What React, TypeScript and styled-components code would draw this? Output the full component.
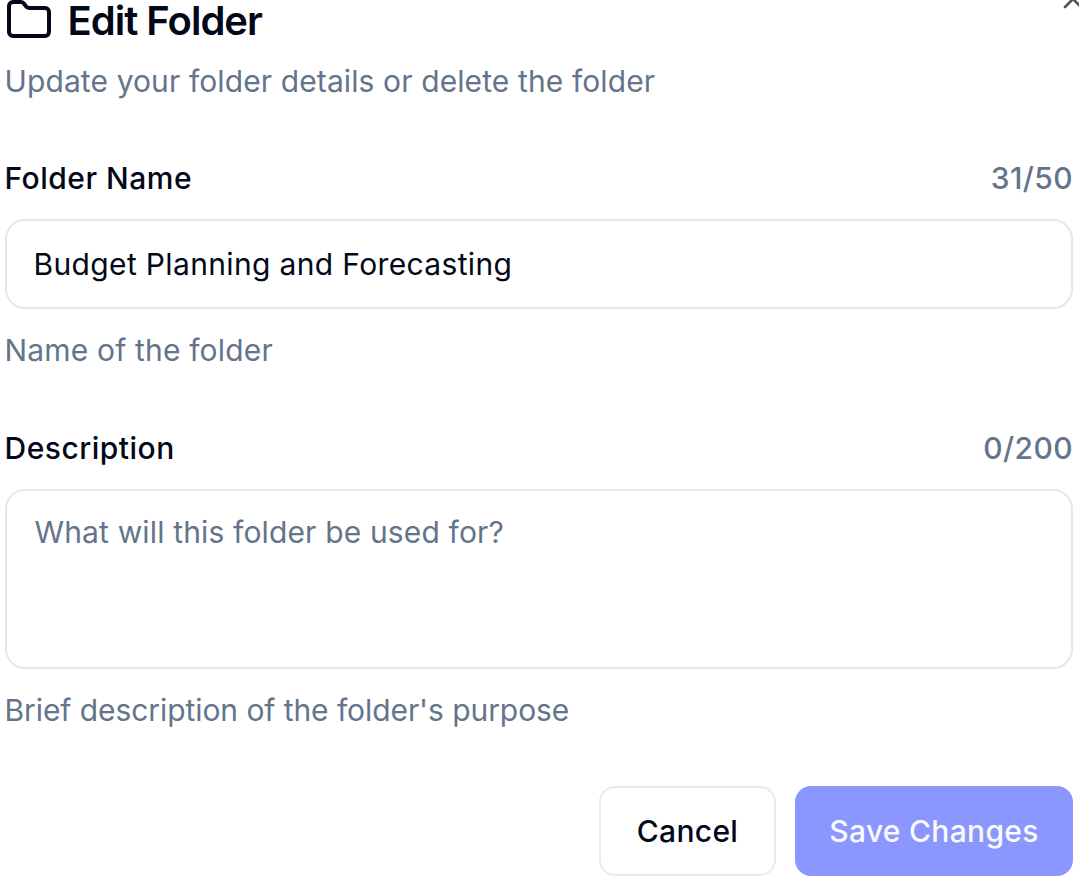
import React from "react";
import styled, { createGlobalStyle } from "styled-components";

const Global = createGlobalStyle`
  html, body { margin: 0; padding: 0; background: #fff; overflow: hidden; }
  body { font-family: Inter, "Liberation Sans", sans-serif; }
  * { box-sizing: border-box; }
`;
const Dialog = styled.div`
  position: relative;
  width: 1079px;
  height: 886px;
  padding: 0 6px 0 4.5px;
  display: flex;
  flex-direction: column;
  overflow: hidden;
`;
const TitleRow = styled.div`
  display: flex;
  align-items: center;
  gap: 15px;
  height: 42px;
`;
const FolderIcon = styled.svg`
  flex: none;
  margin-top: -2px;
`;
const Title = styled.h2`
  margin: 0;
  font-size: 40px;
  line-height: 42px;
  font-weight: 600;
  letter-spacing: -1px;
  color: #020817;
`;
const Close = styled.div`
  position: absolute;
  top: -17px;
  right: -10px;
  color: #4b5563;
  display: flex;
`;
const Sub = styled.p`
  margin: 19px 0 0;
  font-size: 30px;
  line-height: 40px;
  color: #64748b;
  letter-spacing: 0.11px;
`;
const Field = styled.div<{ $top: number }>`
  margin-top: ${(p) => p.$top}px;
  display: flex;
  flex-direction: column;
`;
const LabelRow = styled.div`
  display: flex;
  justify-content: space-between;
  align-items: center;
  height: 40px;
`;
const Label = styled.label`
  font-size: 30px;
  font-weight: 500;
  letter-spacing: 0.5px;
  color: #020817;
`;
const Count = styled.span`
  font-size: 30px;
  font-weight: 500;
  letter-spacing: 0.4px;
  color: #64748b;
`;
const Input = styled.div`
  margin-top: 21px;
  height: 90px;
  border: 2px solid #e5e7eb;
  border-radius: 20px;
  padding: 0 27px;
  display: flex;
  align-items: center;
  font-size: 30px;
  letter-spacing: 0.35px;
  color: #020817;
`;
const TextArea = styled.div`
  margin-top: 21px;
  height: 180px;
  border: 2px solid #e5e7eb;
  border-radius: 20px;
  padding: 21px 28px;
  font-size: 30px;
  line-height: 40px;
  letter-spacing: 0.15px;
  color: #64748b;
`;
const Help = styled.p<{ $tracking: number }>`
  margin: 21px 0 0;
  font-size: 30px;
  line-height: 40px;
  letter-spacing: ${(p) => p.$tracking}px;
  color: #64748b;
`;
const Footer = styled.div`
  margin-top: 56px;
  display: flex;
  justify-content: flex-end;
  gap: 19px;
`;
const Button = styled.button<{ $primary?: boolean }>`
  height: 90px;
  width: ${(p) => (p.$primary ? "278px" : "177px")};
  border-radius: 16px;
  font-family: inherit;
  font-size: 30px;
  font-weight: 500;
  letter-spacing: 0.3px;
  padding: 0;
  border: ${(p) => (p.$primary ? "none" : "2px solid #e8ecf2")};
  background: ${(p) => (p.$primary ? "#8c96ff" : "#fff")};
  color: ${(p) => (p.$primary ? "#f8fafc" : "#020817")};
`;

export default function App() {
  return (
    <Dialog>
      <Global />
      <Close>
        <svg width="32" height="32" viewBox="0 0 24 24" fill="none" stroke="currentColor" strokeWidth="2" strokeLinecap="round" strokeLinejoin="round">
          <path d="M18 6 6 18" /><path d="m6 6 12 12" />
        </svg>
      </Close>
      <TitleRow>
        <FolderIcon width="48" height="48" viewBox="0 0 24 24" fill="none" stroke="#020817" strokeWidth="2" strokeLinecap="round" strokeLinejoin="round">
          <path d="M20 20a2 2 0 0 0 2-2V8a2 2 0 0 0-2-2h-7.9a2 2 0 0 1-1.69-.9L9.6 3.9A2 2 0 0 0 7.93 3H4a2 2 0 0 0-2 2v13a2 2 0 0 0 2 2Z" />
        </FolderIcon>
        <Title>Edit Folder</Title>
      </TitleRow>
      <Sub>Update your folder details or delete the folder</Sub>
      <Field $top={57}>
        <LabelRow><Label>Folder Name</Label><Count>31/50</Count></LabelRow>
        <Input>Budget Planning and Forecasting</Input>
        <Help $tracking={0.17}>Name of the folder</Help>
      </Field>
      <Field $top={58}>
        <LabelRow><Label>Description</Label><Count>0/200</Count></LabelRow>
        <TextArea>What will this folder be used for?</TextArea>
        <Help $tracking={-0.07}>Brief description of the folder's purpose</Help>
      </Field>
      <Footer>
        <Button>Cancel</Button>
        <Button $primary>Save Changes</Button>
      </Footer>
    </Dialog>
  );
}
